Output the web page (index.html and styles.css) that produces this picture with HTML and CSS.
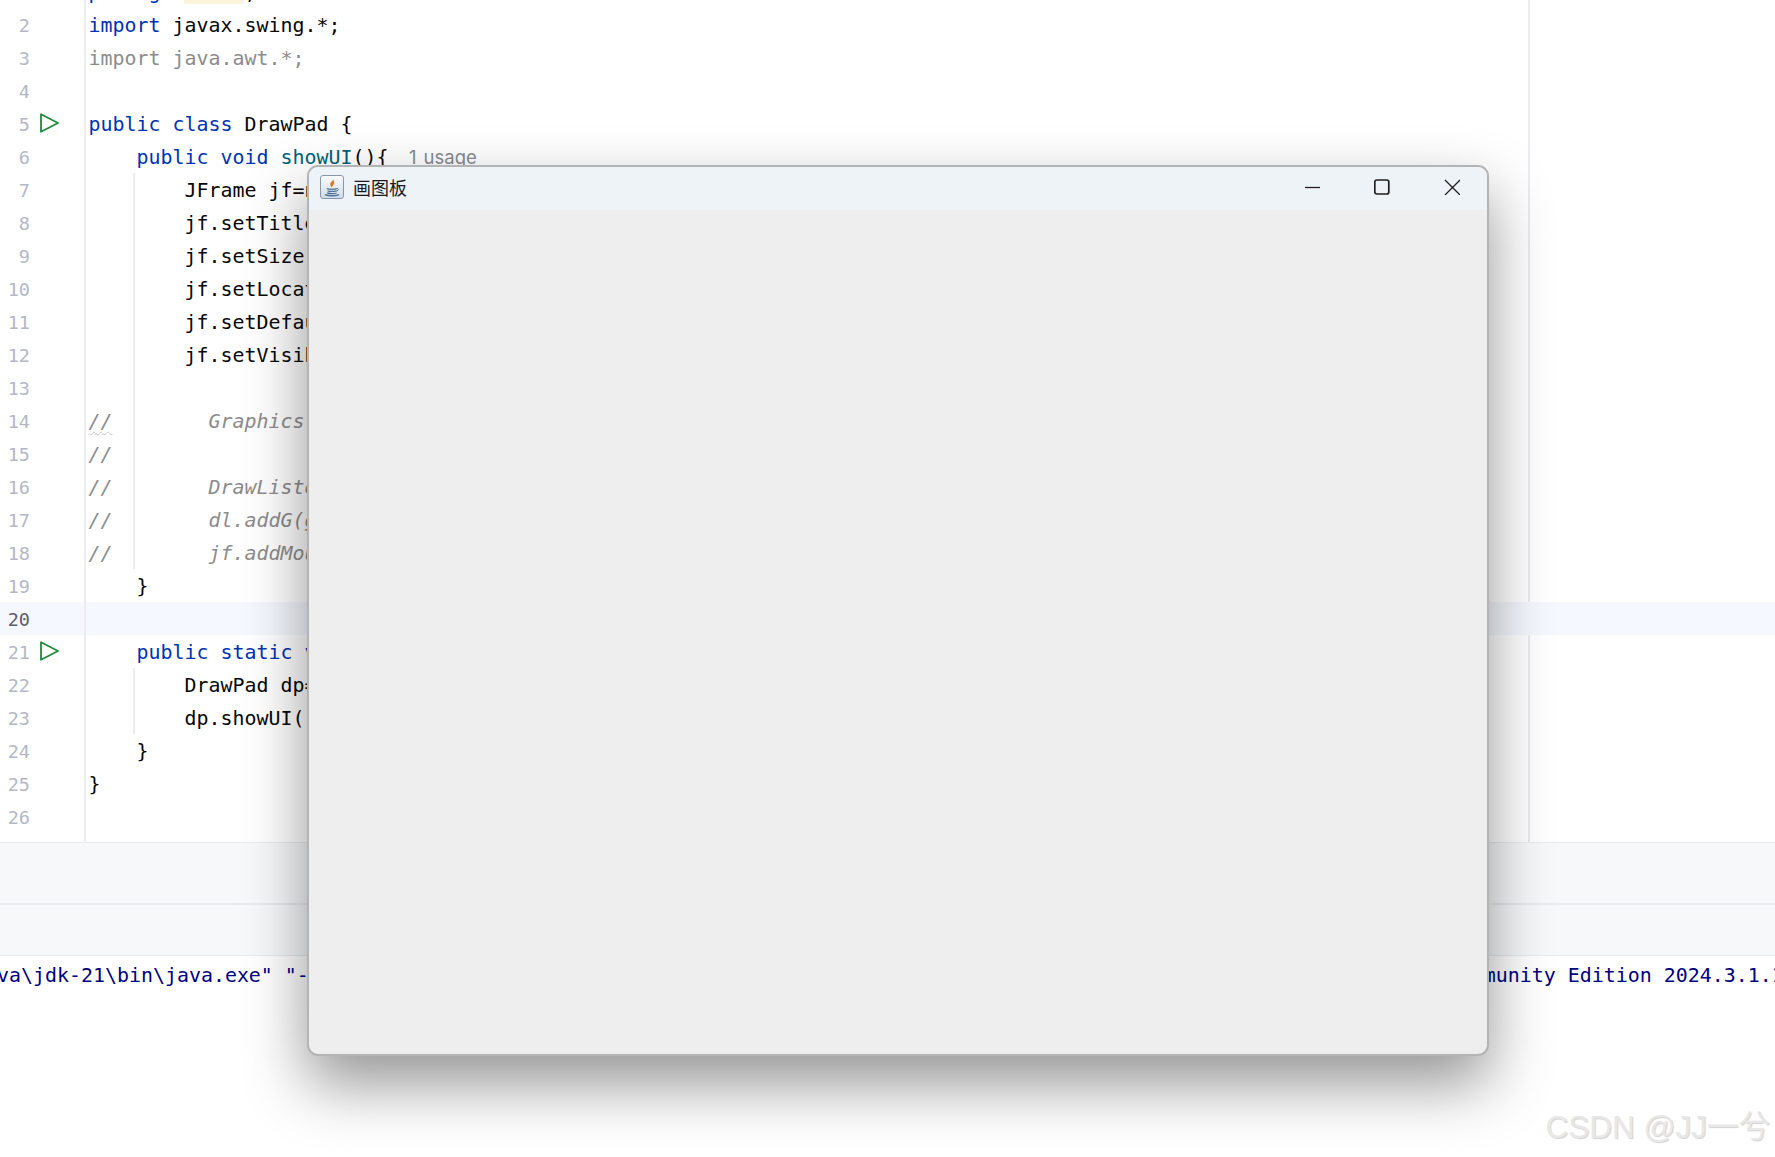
FILE: index.html
```html
<!DOCTYPE html>
<html lang="zh">
<head>
<meta charset="utf-8">
<title>DrawPad</title>
<link rel="stylesheet" href="styles.css">
</head>
<body>
<main class="ide">
  <section class="editor">
    <div class="lines">
      <div class="line"><div class="gutter"></div><div class="code"><span class="k">package</span> <span class="hl">draw1</span>;</div></div>
      <div class="line"><div class="gutter"><span class="num">2</span></div><div class="code"><span class="k">import</span> javax.swing.*;</div></div>
      <div class="line"><div class="gutter"><span class="num">3</span></div><div class="code"><span class="c">import java.awt.*;</span></div></div>
      <div class="line"><div class="gutter"><span class="num">4</span></div><div class="code"></div></div>
      <div class="line"><div class="gutter"><span class="num">5</span><svg class="run" viewBox="0 0 20 20"><path d="M2 1.200v17.600L19 10z"/></svg></div><div class="code"><span class="k">public class</span> DrawPad {</div></div>
      <div class="line"><div class="gutter"><span class="num">6</span></div><div class="code">    <span class="k">public void</span> <span class="m">showUI</span>(){<span class="usage">1 usage</span></div></div>
      <div class="line"><div class="gutter"><span class="num">7</span></div><div class="code guide">        JFrame jf=n</div></div>
      <div class="line"><div class="gutter"><span class="num">8</span></div><div class="code guide">        jf.setTitle</div></div>
      <div class="line"><div class="gutter"><span class="num">9</span></div><div class="code guide">        jf.setSize(</div></div>
      <div class="line"><div class="gutter"><span class="num">10</span></div><div class="code guide">        jf.setLocat</div></div>
      <div class="line"><div class="gutter"><span class="num">11</span></div><div class="code guide">        jf.setDefau</div></div>
      <div class="line"><div class="gutter"><span class="num">12</span></div><div class="code guide">        jf.setVisib</div></div>
      <div class="line"><div class="gutter"><span class="num">13</span></div><div class="code guide"></div></div>
      <div class="line"><div class="gutter"><span class="num">14</span></div><div class="code guide"><span class="i"><span class="wavy">//</span>        Graphics</span></div></div>
      <div class="line"><div class="gutter"><span class="num">15</span></div><div class="code guide"><span class="i">//</span></div></div>
      <div class="line"><div class="gutter"><span class="num">16</span></div><div class="code guide"><span class="i">//        DrawListe</span></div></div>
      <div class="line"><div class="gutter"><span class="num">17</span></div><div class="code guide"><span class="i">//        dl.addG(g</span></div></div>
      <div class="line"><div class="gutter"><span class="num">18</span></div><div class="code guide"><span class="i">//        jf.addMou</span></div></div>
      <div class="line"><div class="gutter"><span class="num">19</span></div><div class="code">    }</div></div>
      <div class="line current"><div class="gutter"><span class="num">20</span></div><div class="code"></div></div>
      <div class="line"><div class="gutter"><span class="num">21</span><svg class="run" viewBox="0 0 20 20"><path d="M2 1.200v17.600L19 10z"/></svg></div><div class="code">    <span class="k">public static v</span></div></div>
      <div class="line"><div class="gutter"><span class="num">22</span></div><div class="code guide">        DrawPad dp=</div></div>
      <div class="line"><div class="gutter"><span class="num">23</span></div><div class="code guide">        dp.showUI()</div></div>
      <div class="line"><div class="gutter"><span class="num">24</span></div><div class="code">    }</div></div>
      <div class="line"><div class="gutter"><span class="num">25</span></div><div class="code">}</div></div>
      <div class="line"><div class="gutter"><span class="num">26</span></div><div class="code"></div></div>
      <div class="line"><div class="gutter"></div><div class="code"></div></div>
    </div>
  </section>
  <div class="bar bar-one"></div>
  <div class="bar bar-two"></div>
  <section class="console">
    <span>va\jdk-21\bin\java.exe" "-</span>
    <span>munity Edition 2024.3.1.1</span>
  </section>
</main>

<div class="window">
  <header class="titlebar">
    <svg class="app-icon" viewBox="0 0 24 24">
      <defs>
        <linearGradient id="tile" x1="0" y1="0" x2="0" y2="1">
          <stop offset="0" stop-color="#fbfcfd"/>
          <stop offset="1" stop-color="#cfdbe7"/>
        </linearGradient>
      </defs>
      <rect x="0.500" y="0.500" width="23" height="23" rx="2.500" fill="url(#tile)" stroke="#8598ab"/>
      <path d="M13.500 3c.8 2.400-3.800 3.800-3.200 6.800.2 1.200 1 1.900 1.300 3 .3-1.800 3.600-3.400 2.300-6-.4-1-.3-2.600-.4-3.800z" fill="#e0761f"/>
      <path d="M6.800 13.600c2.700.8 7.600.8 10 0M7.600 15.800c2.300.6 6.200.6 8.400 0M7.200 18c2.600.7 7.300.7 9.400 0M5 19.600c3.200 1.500 10.800 1.500 14 0" fill="none" stroke="#4f7396" stroke-width="1.300"/>
      <path d="M16.600 13.500c2.400-.4 2.400 2.400-.9 2.700" fill="none" stroke="#4f7396" stroke-width="1"/>
    </svg>
    <span class="win-title">画图板</span>
    <div class="controls">
      <svg class="ctl" viewBox="0 0 16 16"><path d="M1 8.500h15"/></svg>
      <svg class="ctl ctl-max" viewBox="0 0 16 16"><rect x="0.800" y="1" width="14" height="14" rx="2"/></svg>
      <svg class="ctl" viewBox="0 0 16 16"><path d="M1 1l15 15M16 1L1 16"/></svg>
    </div>
  </header>
</div>

<div class="watermark">CSDN @JJ一兮</div>
</body>
</html>
```

FILE: styles.css
```css
* {
  box-sizing: border-box;
}

html,
body {
  margin: 0;
  height: 100%;
  background: #ffffff;
  overflow: hidden;
}

.ide {
  display: flex;
  flex-direction: column;
  height: 1157px;
  font-family: "DejaVu Sans Mono", "Liberation Mono", monospace;
  font-size: 19.93px;
  color: #080808;
}

.editor {
  height: 842px;
  overflow: hidden;
  background: linear-gradient(#ebecf0, #ebecf0) no-repeat 1528px 0 / 2px 100%;
}

.lines {
  margin-top: -25px;
}

.line {
  display: flex;
  height: 33px;
  line-height: 35px;
}

.line.current {
  background: #f5f8fe;
}

.gutter {
  display: flex;
  flex: none;
  position: relative;
  justify-content: flex-end;
  width: 86px;
  padding-right: 54px;
  border-right: 2px solid #ebecf0;
}

.num {
  font-size: 18.500px;
  color: #b4b8c6;
}

.current .num {
  color: #5a5d6b;
}

.run {
  position: absolute;
  left: 39px;
  top: 6px;
  width: 20px;
  height: 20px;
  fill: none;
  stroke: #208a3c;
  stroke-width: 1.800;
  stroke-linejoin: round;
}

.code {
  flex: 1;
  padding-left: 2.500px;
  white-space: pre;
}

.guide {
  background: linear-gradient(#ebecf0, #ebecf0) no-repeat 47px 0 / 2px 100%;
}

.k {
  color: #0033b3;
}

.m {
  color: #00627a;
}

.c {
  color: #8c8c8c;
}

.i {
  color: #8c8c8c;
  font-style: italic;
}

.wavy {
  text-decoration: underline wavy #c9c9c9 1px;
  text-underline-offset: 3px;
}

.hl {
  background: #fcf3dc;
}

.usage {
  margin-left: 20.500px;
  font-family: Inter, "Noto Sans", sans-serif;
  font-size: 18.500px;
  word-spacing: 2px;
  color: #868a91;
}

.bar {
  background: #f7f8fa;
}

.bar-one {
  height: 61px;
  border-top: 1px solid #ebecf0;
}

.bar-two {
  height: 53px;
  border-top: 2px solid #ebecf0;
  border-bottom: 1px solid #ebecf0;
}

.console {
  display: flex;
  gap: 1175px;
  margin-left: -3px;
  padding-top: 3px;
  line-height: 33px;
  color: #000080;
  white-space: pre;
  overflow: hidden;
}

.console span {
  flex: none;
}

.window {
  position: absolute;
  left: 307px;
  top: 165px;
  width: 1182px;
  height: 891px;
  background: #eeeeee;
  border: 2px solid #b4b4b4;
  border-radius: 11px;
  box-shadow: 0 28px 62px rgba(0, 0, 0, 0.42);
}

.titlebar {
  display: flex;
  align-items: center;
  height: 43px;
  padding: 0 27px 3px 11px;
  background: #eef3f8;
  border-radius: 9px 9px 0 0;
}

.app-icon {
  flex: none;
  width: 24px;
  height: 24px;
}

.win-title {
  margin-left: 9px;
  font-family: "Noto Sans CJK SC", sans-serif;
  font-size: 18px;
  color: #1a1a1a;
}

.controls {
  display: flex;
  gap: 54px;
  margin-left: auto;
}

.ctl {
  width: 16px;
  height: 16px;
  fill: none;
  stroke: #1f1f1f;
  stroke-width: 1.300;
}

.ctl-max {
  stroke-width: 1.700;
}

.watermark {
  position: absolute;
  right: 5px;
  top: 1106px;
  font-family: "Liberation Sans", "Noto Sans CJK SC", sans-serif;
  font-size: 31.500px;
  font-weight: 400;
  line-height: 42px;
  color: #e8e8e8;
  text-shadow: 1px 1px 1px #d2d2d2;
  white-space: nowrap;
}
```
